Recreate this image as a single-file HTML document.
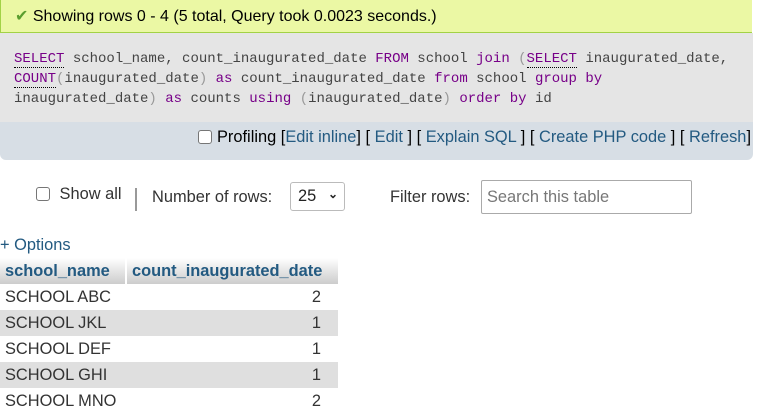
<!DOCTYPE html>
<html><head><style>
body{margin:0;width:757px;height:418px;background:#fff;font-family:"Liberation Sans",sans-serif;font-size:16px;color:#000;position:relative;overflow:hidden}
.ok{position:absolute;left:0;top:0;width:752px;height:33px;background:#ebf8a4;border-left:1px solid #a2d246;border-bottom:1px solid #a2d246;box-sizing:border-box;font-size:16px;line-height:33px;padding-left:14px}
.sql{position:absolute;left:0;top:33px;width:753px;height:89px;background:#e5e5e5;font-family:"Liberation Mono",monospace;font-size:14px;line-height:20px;color:#444;padding:16px 0 0 14px;box-sizing:border-box}
.k{color:#708}.f{color:#708;border-bottom:1px dotted #000}.p{color:#999}
.tb{position:absolute;left:0;top:122px;width:753px;height:38px;background:#d7dee5;border-radius:0 0 6px 6px;text-align:right;font-size:16.4px;line-height:31px;box-sizing:border-box;padding-right:2px}
a{color:#235a81;text-decoration:none}
.b{color:#000}
.cb{display:inline-block;width:12px;height:12px;border:1px solid #767676;border-radius:3px;background:#fff;vertical-align:-2px;margin-right:5px}
table{position:absolute;left:0;top:258px;border-collapse:collapse;font-size:16.4px;width:338px}
th{background:linear-gradient(#fff,#ccc);color:#235a81;text-align:left;font-weight:bold;height:26px;padding:0 5px;border-right:2px solid #fff}
td{height:26px;padding:0 5px;color:#333}
</style></head><body>
<div class="ok"><span style="color:#5a9e2e">&#10004;</span> Showing rows 0 - 4 (5 total, Query took 0.0023 seconds.)</div>
<div class="sql"><span class="f">SELECT</span> school_name, count_inaugurated_date <span class="k">FROM</span> school <span class="k">join</span> <span class="p">(</span><span class="f">SELECT</span> inaugurated_date,<br><span class="f">COUNT</span><span class="p">(</span>inaugurated_date<span class="p">)</span> <span class="k">as</span> count_inaugurated_date <span class="k">from</span> school <span class="k">group by</span><br>inaugurated_date<span class="p">)</span> <span class="k">as</span> counts <span class="k">using</span> <span class="p">(</span>inaugurated_date<span class="p">)</span> <span class="k">order by</span> id</div>
<div class="tb"><span class="cb"></span>Profiling <span class="b">[</span><a>Edit inline</a><span class="b">]</span> [ <a>Edit</a> ] [ <a>Explain SQL</a> ] [ <a>Create PHP code</a> ] [ <a>Refresh</a>]</div>
<div style="position:absolute;left:36px;top:185px;font-size:16.4px;color:#333"><span class="cb"></span> Show all</div>
<div style="position:absolute;left:135px;top:188px;width:2px;height:23px;background:#999"></div>
<div style="position:absolute;left:152px;top:188px;font-size:16.4px;color:#333">Number of rows:</div>
<div style="position:absolute;left:290px;top:182px;width:55px;height:29px;border:1px solid #bbb;border-radius:3px;box-sizing:border-box;font-size:16.4px;line-height:27px;padding-left:7px;color:#222">25 <span style="position:absolute;right:6px;top:-2px;font-size:12px;font-weight:bold">&#8964;</span></div>
<div style="position:absolute;left:390px;top:188px;font-size:16.4px;color:#333">Filter rows:</div>
<div style="position:absolute;left:481px;top:180px;width:211px;height:34px;border:1px solid #aaa;border-radius:2px;box-sizing:border-box;font-size:16.4px;line-height:32px;padding-left:5px;color:#777">Search this table</div>
<div style="position:absolute;left:0;top:236px;color:#235a81;font-size:16.4px">+ Options</div>
<table>
<tr><th style="width:115px">school_name</th><th style="border-right:0">count_inaugurated_date</th></tr>
<tr><td style="background:#fff">SCHOOL ABC</td><td style="background:#fff;text-align:right;padding-right:17px">2</td></tr>
<tr><td style="background:#dfdfdf">SCHOOL JKL</td><td style="background:#dfdfdf;text-align:right;padding-right:17px">1</td></tr>
<tr><td style="background:#fff">SCHOOL DEF</td><td style="background:#fff;text-align:right;padding-right:17px">1</td></tr>
<tr><td style="background:#dfdfdf">SCHOOL GHI</td><td style="background:#dfdfdf;text-align:right;padding-right:17px">1</td></tr>
<tr><td style="background:#fff">SCHOOL MNO</td><td style="background:#fff;text-align:right;padding-right:17px">2</td></tr>
</table>
</body></html>
